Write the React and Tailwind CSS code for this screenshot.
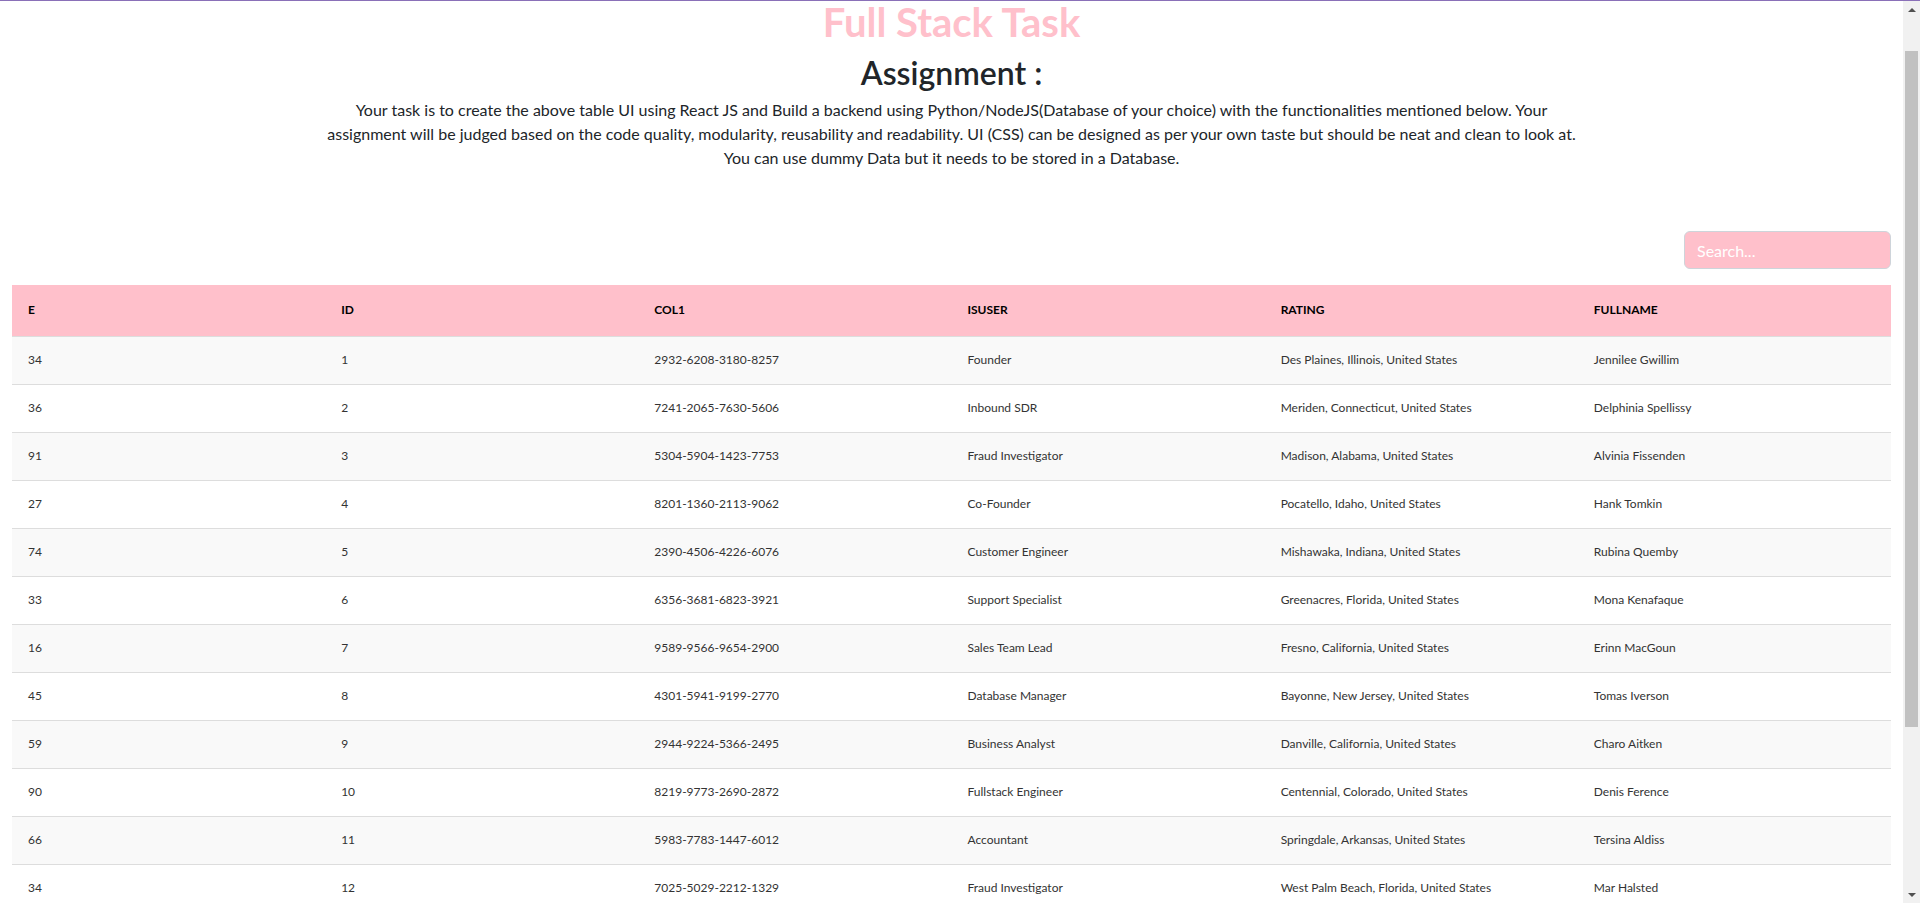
import React, { useState } from 'react';

const ROWS = [
  { e: 34, id: 1, col1: '2932-6208-3180-8257', isuser: 'Founder', rating: 'Des Plaines, Illinois, United States', fullname: 'Jennilee Gwillim' },
  { e: 36, id: 2, col1: '7241-2065-7630-5606', isuser: 'Inbound SDR', rating: 'Meriden, Connecticut, United States', fullname: 'Delphinia Spellissy' },
  { e: 91, id: 3, col1: '5304-5904-1423-7753', isuser: 'Fraud Investigator', rating: 'Madison, Alabama, United States', fullname: 'Alvinia Fissenden' },
  { e: 27, id: 4, col1: '8201-1360-2113-9062', isuser: 'Co-Founder', rating: 'Pocatello, Idaho, United States', fullname: 'Hank Tomkin' },
  { e: 74, id: 5, col1: '2390-4506-4226-6076', isuser: 'Customer Engineer', rating: 'Mishawaka, Indiana, United States', fullname: 'Rubina Quemby' },
  { e: 33, id: 6, col1: '6356-3681-6823-3921', isuser: 'Support Specialist', rating: 'Greenacres, Florida, United States', fullname: 'Mona Kenafaque' },
  { e: 16, id: 7, col1: '9589-9566-9654-2900', isuser: 'Sales Team Lead', rating: 'Fresno, California, United States', fullname: 'Erinn MacGoun' },
  { e: 45, id: 8, col1: '4301-5941-9199-2770', isuser: 'Database Manager', rating: 'Bayonne, New Jersey, United States', fullname: 'Tomas Iverson' },
  { e: 59, id: 9, col1: '2944-9224-5366-2495', isuser: 'Business Analyst', rating: 'Danville, California, United States', fullname: 'Charo Aitken' },
  { e: 90, id: 10, col1: '8219-9773-2690-2872', isuser: 'Fullstack Engineer', rating: 'Centennial, Colorado, United States', fullname: 'Denis Ference' },
  { e: 66, id: 11, col1: '5983-7783-1447-6012', isuser: 'Accountant', rating: 'Springdale, Arkansas, United States', fullname: 'Tersina Aldiss' },
  { e: 34, id: 12, col1: '7025-5029-2212-1329', isuser: 'Fraud Investigator', rating: 'West Palm Beach, Florida, United States', fullname: 'Mar Halsted' },
  { e: 52, id: 13, col1: '3518-0472-8861-2035', isuser: 'Product Designer', rating: 'Boulder, Colorado, United States', fullname: 'Kessia Orrom' },
  { e: 19, id: 14, col1: '6640-2219-7304-5518', isuser: 'Sales Team Lead', rating: 'Tacoma, Washington, United States', fullname: 'Gustavo Brigge' },
  { e: 83, id: 15, col1: '1207-8835-4190-6621', isuser: 'Founder', rating: 'Akron, Ohio, United States', fullname: 'Lorri Dreschler' },
  { e: 40, id: 16, col1: '9031-4476-2258-3804', isuser: 'Accountant', rating: 'Provo, Utah, United States', fullname: 'Ardys Pietrowski' },
];

const COLUMNS = ['e', 'id', 'col1', 'isuser', 'rating', 'fullname'];

// page scrollbar as it shows in the screenshot
function ScrollBar() {
  return (
    <div className="w-[17px] shrink-0 bg-[#f1f1f1] flex flex-col items-center">
      <div className="h-[17px] flex items-center justify-center">
        <div className="w-0 h-0 border-l-[4px] border-r-[4px] border-b-[4px] border-l-transparent border-r-transparent border-b-[#505050]" />
      </div>
      <div className="mt-[33px] w-[13px] h-[676px] bg-[#c1c1c1]" />
      <div className="flex-1" />
      <div className="h-[17px] flex items-center justify-center">
        <div className="w-0 h-0 border-l-[4px] border-r-[4px] border-t-[4px] border-l-transparent border-r-transparent border-t-[#505050]" />
      </div>
    </div>
  );
}

export default function App() {
  const [query, setQuery] = useState('');

  const rows = ROWS.filter((r) =>
    Object.values(r).join(' ').toLowerCase().includes(query.toLowerCase())
  );

  return (
    <div className="h-screen flex overflow-hidden bg-white border-t border-[#8a70b8] font-['Lato','Open_Sans',sans-serif] text-[#212529]">
      <div className="flex-1 min-w-0 overflow-hidden">
        <div className="text-center">
          <h1 className="text-[40px] leading-[42px] font-bold text-[#ffc0cb]">Full Stack Task</h1>
          <h2 className="mt-[11px] text-[32px] leading-[38px] font-semibold">Assignment :</h2>
          <p className="mt-[6px] text-[16px] leading-[24px]">
            Your task is to create the above table UI using React JS and Build a backend using Python/NodeJS(Database of your choice) with the functionalities mentioned below. Your
            <br />
            assignment will be judged based on the code quality, modularity, reusability and readability. UI (CSS) can be designed as per your own taste but should be neat and clean to look at.
            <br />
            You can use dummy Data but it needs to be stored in a Database.
          </p>
        </div>

        <div className="px-3 mt-[61px] pb-[40px]">
          <div className="flex justify-end">
            <input
              type="text"
              value={query}
              onChange={(e) => setQuery(e.target.value)}
              placeholder="Search..."
              className="w-[207px] h-[38px] px-3 rounded-md bg-[#ffc0cb] border border-[#ced4da] text-[16px] text-white placeholder-white outline-none"
            />
          </div>

          <table className="mt-[16px] w-full table-fixed border-collapse text-[12px]">
            <thead>
              <tr className="bg-[#ffc0cb] border-b border-[#dddddd]">
                {COLUMNS.map((c) => (
                  <th key={c} className="h-[51px] px-4 text-left font-bold uppercase text-black">{c}</th>
                ))}
              </tr>
            </thead>
            <tbody>
              {rows.map((r, idx) => (
                <tr key={r.id} className={`border-b border-[#dddddd] ${idx % 2 === 0 ? 'bg-[#f9f9f9]' : 'bg-white'}`}>
                  {COLUMNS.map((c) => (
                    <td key={c} className="h-[48px] px-4 text-left text-[#333333]">{r[c]}</td>
                  ))}
                </tr>
              ))}
            </tbody>
          </table>
        </div>
      </div>
      <ScrollBar />
    </div>
  );
}
